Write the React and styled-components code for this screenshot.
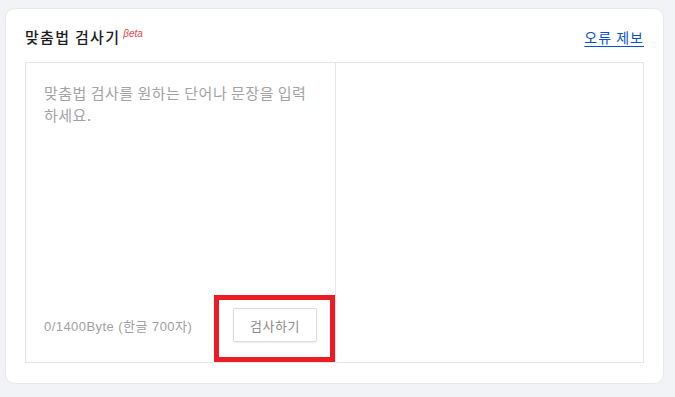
import React from "react";
import styled, { createGlobalStyle } from "styled-components";

const Global = createGlobalStyle`
  html, body { margin: 0; padding: 0; background: #f2f3f6; }
  body { font-family: "Liberation Sans", "Noto Sans CJK KR", Arial, sans-serif; }
  * { box-sizing: border-box; }
`;

const Page = styled.div`
  padding: 8px 11px 13px 5px;
  background: #f2f3f6;
  width: 675px;
  height: 397px;
`;

const Card = styled.section`
  background: #fff;
  border: 1px solid #e8e9ed;
  border-radius: 10px;
  padding: 17px 19px 20px 19px;
  height: 376px;
  display: flex;
  flex-direction: column;
`;

const Header = styled.header`
  display: flex;
  align-items: center;
  justify-content: space-between;
  height: 22px;
  margin-bottom: 14px;
`;

const Title = styled.h2`
  margin: 0;
  font-size: 15px;
  font-weight: 500;
  color: #1e1e1e;
  display: flex;
  align-items: flex-start;
  font-family: "Noto Sans CJK KR", sans-serif;
  line-height: 22px;
  letter-spacing: 1.3px;
`;

const Beta = styled.em`
  font-family: "Liberation Sans", Arial, sans-serif;
  font-size: 10px;
  color: #e8464a;
  font-style: italic;
  margin-left: 3px;
  letter-spacing: 0;
  line-height: 12px;
  margin-top: 2px;
`;

const ReportLink = styled.a`
  font-size: 14px;
  color: #0a4fd1;
  text-decoration: underline;
  text-underline-offset: 3px;
  font-family: "Noto Sans CJK KR", sans-serif;
  letter-spacing: 1px;
  margin-right: 0;
  cursor: pointer;
`;

const Editor = styled.div`
  flex: 1;
  display: grid;
  grid-template-columns: 310px 1fr;
  border: 1px solid #e6e6e8;
`;

const InputPane = styled.div`
  display: flex;
  flex-direction: column;
  border-right: 1px solid #e6e6e8;
  padding: 19px 18px 20px 18px;
`;

const TextArea = styled.textarea`
  flex: 1;
  border: none;
  outline: none;
  resize: none;
  padding: 0;
  width: 266px;
  font-size: 15px;
  line-height: 22px;
  letter-spacing: 0.5px;
  color: #333;
  font-family: "Noto Sans CJK KR", sans-serif;
  &::placeholder { color: #a3a3a3; }
`;

const Footer = styled.div`
  display: flex;
  align-items: center;
  justify-content: space-between;
`;

const Counter = styled.span`
  font-size: 13px;
  color: #a0a0a0;
  letter-spacing: 0.45px;
`;

const ButtonWrap = styled.div`
  position: relative;
`;

const CheckButton = styled.button`
  width: 84px;
  height: 34px;
  background: #fff;
  border: 1px solid #dcdcdc;
  border-radius: 2px;
  box-shadow: 0 1px 2px rgba(0, 0, 0, 0.08);
  font-family: "Noto Sans CJK KR", sans-serif;
  font-size: 13px;
  letter-spacing: 0.5px;
  color: #8a8a8a;
  cursor: pointer;
  padding: 0;
`;

const Highlight = styled.span`
  position: absolute;
  left: -19px;
  right: -18px;
  top: -13px;
  bottom: -20px;
  border: 5px solid #ec1c24;
  pointer-events: none;
`;

const ResultPane = styled.div``;

export default function App() {
  return (
    <>
      <Global />
      <Page>
        <Card>
          <Header>
            <Title>
              맞춤법 검사기<Beta>βeta</Beta>
            </Title>
            <ReportLink>오류 제보</ReportLink>
          </Header>
          <Editor>
            <InputPane>
              <TextArea placeholder="맞춤법 검사를 원하는 단어나 문장을 입력하세요." />
              <Footer>
                <Counter>0/1400Byte (한글 700자)</Counter>
                <ButtonWrap>
                  <CheckButton>검사하기</CheckButton>
                  <Highlight />
                </ButtonWrap>
              </Footer>
            </InputPane>
            <ResultPane />
          </Editor>
        </Card>
      </Page>
    </>
  );
}
